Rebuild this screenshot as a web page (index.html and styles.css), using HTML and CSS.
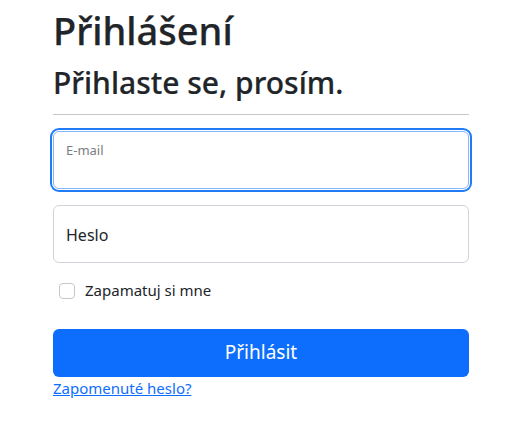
FILE: index.html
```html
<!DOCTYPE html>
<html lang="cs">
<head>
<meta charset="utf-8">
<title>Přihlášení</title>
<link rel="stylesheet" href="styles.css">
</head>
<body>
<main class="wrap">
  <h1 class="title">Přihlášení</h1>
  <h2 class="subtitle">Přihlaste se, prosím.</h2>
  <hr class="rule">
  <form class="form">
    <div class="floating focused">
      <input class="field" type="email" id="email">
      <label class="float-label small" for="email">E-mail</label>
    </div>
    <div class="floating">
      <input class="field" type="password" id="pass">
      <label class="float-label" for="pass">Heslo</label>
    </div>
    <div class="check">
      <span class="box"></span>
      <span class="check-label">Zapamatuj si mne</span>
    </div>
    <button class="btn" type="button">Přihlásit</button>
    <a class="link" href="#">Zapomenuté heslo?</a>
  </form>
</main>
</body>
</html>
```
FILE: styles.css
```css
* { box-sizing: border-box; }
html, body { margin: 0; padding: 0; background: #fff; }
body {
  font-family: "Noto Sans", "Open Sans", sans-serif;
  color: #212529;
  font-size: 16px;
  line-height: 1.5;
}
.wrap {
  width: 416px;
  margin-left: 53px;
  padding-top: 8px;
}
.title {
  font-size: 38px;
  font-weight: 500;
  line-height: 1.2;
  margin: 0 0 11px;
  -webkit-text-stroke: 0.25px #212529;
}
.subtitle {
  font-size: 30px;
  font-weight: 500;
  line-height: 1.2;
  margin: 0;
  -webkit-text-stroke: 0.2px #212529;
}
.rule {
  border: 0;
  border-top: 1px solid #c8c8c8;
  margin: 13px 0 16px;
}
.form { display: flex; flex-direction: column; }
.floating {
  position: relative;
  height: 58px;
  margin-bottom: 16px;
}
.field {
  display: block;
  width: 100%;
  height: 58px;
  border: 1px solid #ced4da;
  border-radius: 6px;
  background: #fff;
  font: inherit;
  outline: none;
}
.focused .field {
  border-color: #86b7fe;
  box-shadow: 0 0 0 1px #fff, 0 0 0 3px #1f7cf6;
}
.float-label {
  position: absolute;
  left: 13px;
  top: 18px;
  font-size: 16px;
  color: #212529;
}
.float-label.small {
  top: 10px;
  font-size: 13px;
  color: #7a7d80;
}
.check {
  display: flex;
  align-items: center;
  gap: 10px;
  margin: 0 0 26px 6px;
  height: 24px;
}
.box {
  width: 16px;
  height: 16px;
  border: 1px solid #c4c8cc;
  border-radius: 4px;
  background: #fff;
}
.check-label { font-size: 15px; }
.btn {
  height: 48px;
  width: 100%;
  border: 0;
  border-radius: 6px;
  background: #0d6efd;
  color: #fff;
  font: inherit;
  font-size: 19px;
  cursor: pointer;
}
.link {
  color: #0d6efd;
  text-decoration: underline;
  font-size: 15px;
  margin-top: 0;
  align-self: flex-start;
}
```
